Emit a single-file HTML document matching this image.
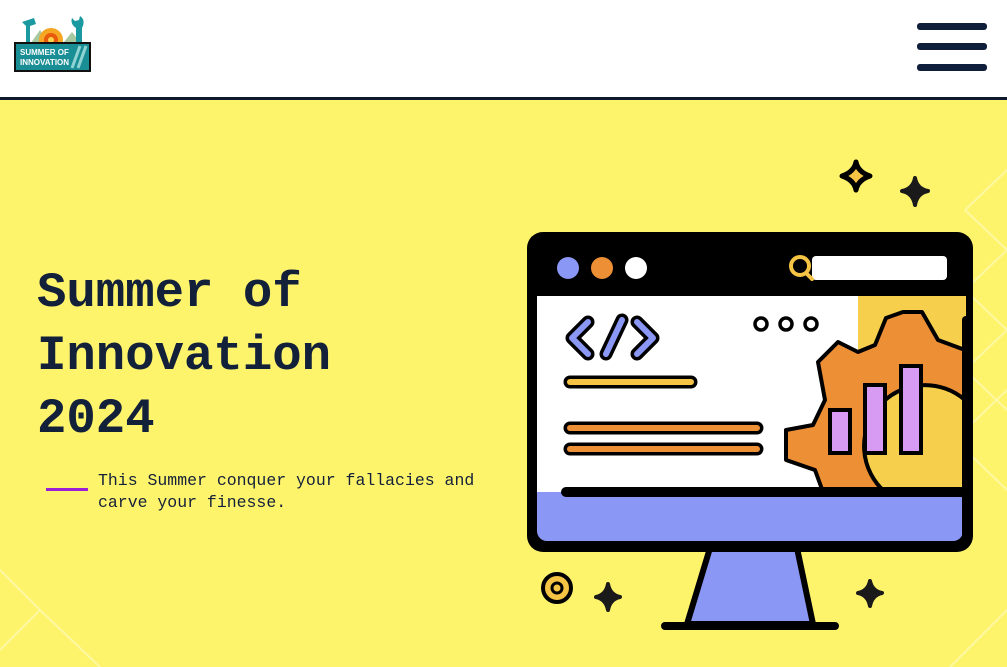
<!DOCTYPE html>
<html><head><style>
*{margin:0;padding:0;box-sizing:border-box}
body{width:1007px;height:667px;overflow:hidden;background:#fef46c;font-family:"Liberation Mono",monospace;position:relative}
.hdr{position:absolute;left:0;top:0;width:1007px;height:100px;background:#fff;border-bottom:3px solid #101a2e}
.bar{position:absolute;left:917px;width:70px;height:7px;border-radius:3px;background:#0f1e3a}
h1{position:absolute;left:37px;top:262px;font-size:49px;line-height:63px;color:#13203a;font-weight:bold;font-family:"Liberation Mono",monospace}
.sub{position:absolute;left:98px;top:470px;font-size:16.5px;line-height:22px;color:#13203a}
.dash{position:absolute;left:46px;top:488px;width:42px;height:3px;background:#9b1fd6}
</style></head><body>
<div class="hdr">
<svg width="100" height="80" style="position:absolute;left:10px;top:12px" viewBox="0 0 100 80">
<polygon points="18,35 30,18 42,35" fill="#a8c9a0"/><polygon points="50,35 62,20 74,35" fill="#a8c9a0"/>
<circle cx="41" cy="28" r="12" fill="#f5a623"/><circle cx="41" cy="28" r="7" fill="#e8590c"/><circle cx="41" cy="28" r="3" fill="#fcd34d"/>
<path d="M12 10 L24 6 L26 12 L20 14 L20 34 L16 34 L16 14 Z" fill="#1a9aa0"/>
<path d="M66 34 L66 16 Q60 12 62 6 L65 9 L69 8 L70 4 Q76 8 72 16 L72 34Z" fill="#1a9aa0"/>
<rect x="5" y="31" width="75" height="28" fill="#1a8e95" stroke="#111" stroke-width="2"/>
<text x="10" y="43" font-family="Liberation Sans" font-weight="bold" font-size="8" fill="#fff">SUMMER OF</text>
<text x="10" y="53" font-family="Liberation Sans" font-weight="bold" font-size="8" fill="#fff">INNOVATION</text>
<path d="M62 56 L70 34 M68 56 L76 34" stroke="#8fd3d3" stroke-width="3"/>
</svg>
<div class="bar" style="top:23px"></div><div class="bar" style="top:43px"></div><div class="bar" style="top:64px"></div>
</div>
<svg width="1007" height="667" style="position:absolute;left:0;top:0">
<g stroke="#fdf9b0" stroke-width="2" fill="none" opacity="0.8">
<path d="M965 210 L1007 170 M965 210 L1007 250 M965 290 L1007 250 M965 290 L1007 330 M965 370 L1007 330 M965 370 L1007 410 M955 440 L1007 390 M955 440 L1007 490"/>
<path d="M950 667 L1007 610 M0 570 L40 610 L0 650 M40 610 L100 667"/>
</g>
<polygon points="710,548 797,548 813,624 687,624" fill="#8a97f4" stroke="#000" stroke-width="6" stroke-linejoin="round"/>
<line x1="665" y1="626" x2="835" y2="626" stroke="#000" stroke-width="8" stroke-linecap="round"/>
<rect x="527" y="232" width="446" height="320" rx="16" fill="#000"/>
<rect x="537" y="296" width="426" height="245" rx="10" fill="#8a97f4"/>
<rect x="537" y="296" width="426" height="196" fill="#fff"/>
<rect x="858" y="296" width="108" height="196" fill="#f6cf4c"/>
<polygon points="818,362 838,342 858,352 875,345 886,318 903,312 922,312 938,340 965,350 965,492 823,492 815,470 786,460 786,430 813,425 825,400" fill="#ed8f35" stroke="#000" stroke-width="4" stroke-linejoin="round"/>
<path d="M885 492 A52 52 0 0 1 965 400 L965 492 Z" fill="#f6cf4c" stroke="#000" stroke-width="4"/>
<rect x="830" y="410" width="20" height="43" fill="#d79bf3" stroke="#000" stroke-width="4"/>
<rect x="865" y="385" width="20" height="68" fill="#d79bf3" stroke="#000" stroke-width="4"/>
<rect x="901" y="366" width="20" height="87" fill="#d79bf3" stroke="#000" stroke-width="4"/>
<line x1="966" y1="320" x2="966" y2="540" stroke="#000" stroke-width="8" stroke-linecap="round"/>
<line x1="566" y1="492" x2="966" y2="492" stroke="#000" stroke-width="10" stroke-linecap="round"/>
<circle cx="568" cy="268" r="11" fill="#8a97f4"/><circle cx="602" cy="268" r="11" fill="#ed8f35"/><circle cx="636" cy="268" r="11" fill="#fff"/>
<rect x="812" y="256" width="135" height="24" rx="4" fill="#fff"/>
<circle cx="800" cy="266" r="9" fill="none" stroke="#f6c445" stroke-width="4"/><line x1="806" y1="273" x2="812" y2="279" stroke="#f6c445" stroke-width="4" stroke-linecap="round"/>
<g stroke="#000" stroke-width="13" stroke-linecap="round" stroke-linejoin="round" fill="none"><path d="M588 322 L572 338 L588 354 M637 322 L653 338 L637 354 M622 320 L606 354"/></g>
<g stroke="#8a97f4" stroke-width="6" stroke-linecap="round" stroke-linejoin="round" fill="none"><path d="M588 322 L572 338 L588 354 M637 322 L653 338 L637 354 M622 320 L606 354"/></g>
<g fill="#fff" stroke="#000" stroke-width="3.5"><circle cx="761" cy="324" r="6"/><circle cx="786" cy="324" r="6"/><circle cx="811" cy="324" r="6"/></g>
<g stroke-linecap="round"><line x1="570" y1="382" x2="691" y2="382" stroke="#000" stroke-width="13"/><line x1="570" y1="382" x2="691" y2="382" stroke="#f6c445" stroke-width="6"/>
<line x1="570" y1="428" x2="757" y2="428" stroke="#000" stroke-width="13"/><line x1="570" y1="428" x2="757" y2="428" stroke="#ed8f35" stroke-width="6"/>
<line x1="570" y1="449" x2="757" y2="449" stroke="#000" stroke-width="13"/><line x1="570" y1="449" x2="757" y2="449" stroke="#ed8f35" stroke-width="6"/></g>
<path d="M856 162 Q858 172 870 176 Q858 180 856 190 Q854 180 842 176 Q854 172 856 162Z" fill="#f6c445" stroke="#000" stroke-width="5" stroke-linejoin="round"/>
<path d="M915 178 Q917 189 928 191 Q917 193 915 205 Q913 193 902 191 Q913 189 915 178Z" fill="#1a1a1a" stroke="#1a1a1a" stroke-width="4" stroke-linejoin="round"/>
<path d="M608 584 Q610 595 620 597 Q610 599 608 610 Q606 599 596 597 Q606 595 608 584Z" fill="#1a1a1a" stroke="#1a1a1a" stroke-width="4" stroke-linejoin="round"/>
<path d="M870 581 Q872 591 882 593 Q872 595 870 606 Q868 595 858 593 Q868 591 870 581Z" fill="#1a1a1a" stroke="#1a1a1a" stroke-width="4" stroke-linejoin="round"/>
<circle cx="557" cy="588" r="14" fill="#f6c445" stroke="#000" stroke-width="4"/><circle cx="557" cy="588" r="5" fill="none" stroke="#000" stroke-width="3"/>
</svg>
<h1>Summer of<br>Innovation<br>2024</h1>
<div class="dash"></div>
<div class="sub">This Summer conquer your fallacies and<br>carve your finesse.</div>
</body></html>
